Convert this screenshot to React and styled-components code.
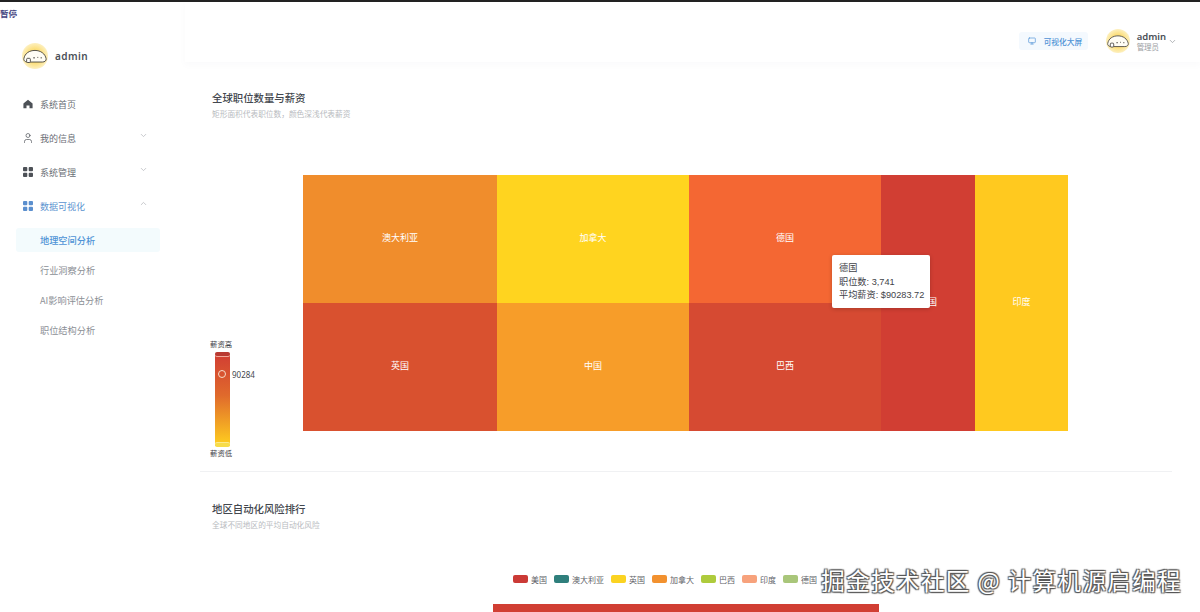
import React from 'react';
import styled, { createGlobalStyle } from 'styled-components';
import { ChevronDown, ChevronUp, Monitor, User } from 'lucide-react';

const GlobalStyle = createGlobalStyle`
  html, body {
    margin: 0;
    padding: 0;
    background: #fff;
    overflow: hidden;
  }
  body {
    font-family: "Noto Sans CJK SC", "Noto Sans", sans-serif;
    color: #4a4f57;
  }
`;

const Page = styled.div`
  position: relative;
  display: flex;
  width: 1200px;
  height: 612px;
  overflow: hidden;
  border-top: 2px solid #222;
  box-sizing: border-box;
`;

const PausedMark = styled.div`
  position: absolute;
  left: 0;
  top: 5px;
  font-size: 8.5px;
  line-height: 12px;
  font-weight: 700;
  color: #45457f;
`;

const Sidebar = styled.aside`
  flex: 0 0 185px;
  box-sizing: border-box;
  padding: 40px 0 0 16px;
`;

const Brand = styled.div`
  display: flex;
  align-items: center;
  gap: 7px;
  height: 28px;
  padding-left: 6px;
  margin-bottom: 17px;
  font-family: "Noto Sans", sans-serif;
  font-size: 10px;
  font-weight: 600;
  letter-spacing: 0.4px;
  color: #4a4f57;
`;

const MenuRow = styled.div`
  display: flex;
  align-items: center;
  width: 144px;
  height: 34px;
  box-sizing: border-box;
  padding-left: 6px;
  font-size: 9px;
  color: ${p => (p.$open ? '#5b93cf' : '#6a6e75')};
`;

const MenuIcon = styled.span`
  display: flex;
  justify-content: center;
  width: 12px;
  margin-right: 6px;
  color: ${p => (p.$open ? '#5b8fce' : '#4d5157')};
`;

const MenuLabel = styled.span`
  flex: 1;
`;

const Caret = styled.span`
  display: flex;
  margin-right: 12px;
  margin-top: -6px;
  color: #b5b8bc;
`;

const SubMenu = styled.div`
  padding-top: 5px;
`;

const SubRow = styled.div`
  display: flex;
  align-items: center;
  width: 144px;
  height: 24px;
  margin-bottom: 6px;
  padding-left: 24px;
  box-sizing: border-box;
  border-radius: 3px;
  font-size: 9.2px;
  background: ${p => (p.$active ? '#f3fbfd' : 'transparent')};
  color: ${p => (p.$active ? '#4f93d6' : '#8c9096')};
  font-weight: ${p => (p.$active ? 500 : 400)};
`;

const Main = styled.main`
  flex: 1;
  min-width: 0;
`;

const Header = styled.header`
  display: flex;
  justify-content: flex-end;
  align-items: center;
  height: 60px;
  padding: 18px 23px 0 0;
  box-sizing: border-box;
  box-shadow: 0 3px 6px rgba(120, 130, 150, 0.04);
`;

const ScreenButton = styled.div`
  display: flex;
  align-items: center;
  gap: 8px;
  width: 60px;
  height: 18px;
  padding-left: 9px;
  margin-right: 18px;
  border-radius: 3px;
  background: #f4f9fe;
  color: #4f93d6;
  font-size: 7.7px;
  font-weight: 500;
  white-space: nowrap;
`;

const UserName = styled.div`
  display: flex;
  flex-direction: column;
  margin-left: 7px;
  margin-right: 2px;
  font-size: 7.5px;
  line-height: 9px;
  color: #9a9da2;
`;

const UserTitle = styled.span`
  font-family: "Noto Sans", sans-serif;
  font-size: 9.5px;
  line-height: 11px;
  font-weight: 600;
  color: #4a4f57;
`;

const Content = styled.div`
  padding: 0 28px 0 15px;
`;

const Section = styled.section`
  padding: ${p => p.$top}px 0 0 12px;
  border-bottom: ${p => (p.$divided ? '1px solid #f0f1f3' : 'none')};
  height: ${p => p.$height}px;
  box-sizing: border-box;
`;

const SectionTitle = styled.h3`
  margin: 0;
  font-size: 10.4px;
  line-height: 14px;
  font-weight: 500;
  color: #43474e;
`;

const SectionHint = styled.p`
  margin: 3px 0 0;
  font-size: 7.7px;
  line-height: 11px;
  color: #b8bbc0;
`;

const ChartRow = styled.div`
  display: flex;
  align-items: flex-start;
  margin-top: 56px;
`;

const VisualMap = styled.div`
  flex: 0 0 93px;
  display: flex;
  flex-direction: column;
  align-items: flex-start;
  margin-top: 163px;
  margin-left: -2px;
`;

const MapLabel = styled.span`
  font-size: 7.4px;
  line-height: 11px;
  color: #3f4349;
`;

const MapBar = styled.div`
  position: relative;
  width: 15px;
  height: 92px;
  margin: 5px 0 1px 5px;
  background: linear-gradient(#d13e33, #e06a2c 45%, #ffd01f);
`;

const MapCap = styled.span`
  position: absolute;
  left: 0;
  width: 15px;
  height: 4px;
  border-radius: 2px;
  top: ${p => (p.$end ? '89px' : '-2px')};
  background: ${p => (p.$end ? '#f7dc4a' : '#b93a32')};
  box-shadow: ${p => (p.$end ? '0 -1px 0 #fbe98c' : '0 1px 0 #f2a99a')};
`;

const MapHandle = styled.span`
  position: absolute;
  left: 3px;
  top: 16px;
  width: 8px;
  height: 8px;
  box-sizing: border-box;
  border: 1.5px solid #f5ddc8;
  border-radius: 50%;
`;

const MapValue = styled.span`
  position: absolute;
  left: 17px;
  top: 15px;
  font-family: "Noto Sans", sans-serif;
  font-size: 8px;
  line-height: 11px;
  color: #43474e;
`;

const Treemap = styled.div`
  position: relative;
  display: grid;
  grid-template-columns: 194px 192px 192px 94px 93px;
  grid-template-rows: 128px 128px;
  width: 765px;
`;

const Tile = styled.div`
  display: flex;
  align-items: center;
  justify-content: center;
  padding-bottom: 3px;
  box-sizing: border-box;
  grid-column: ${p => p.$col};
  grid-row: ${p => (p.$tall ? '1 / span 2' : p.$row)};
  background: ${p => p.$color};
  color: #fff;
  font-size: 9px;
`;

const Tooltip = styled.div`
  position: absolute;
  left: 529px;
  top: 80px;
  width: 98px;
  height: 53px;
  box-sizing: border-box;
  padding: 7px 7px;
  border-radius: 2px;
  background: #fff;
  box-shadow: 0 1px 4px rgba(0, 0, 0, 0.2);
  font-family: "Liberation Sans", "Noto Sans CJK SC", sans-serif;
  font-size: 9.2px;
  line-height: 13.5px;
  color: #3f4349;
  white-space: nowrap;
`;

const Legend = styled.div`
  display: flex;
  align-items: center;
  margin: 44px 0 0 301px;
  height: 10px;
  white-space: nowrap;
`;

const LegendItem = styled.div`
  display: flex;
  align-items: center;
  gap: 3px;
  margin-right: 7px;
  font-size: 8px;
  color: #5f6369;
`;

const Swatch = styled.span`
  width: 15px;
  height: 8px;
  border-radius: 2px;
  background: ${p => p.$color};
`;

const BarStub = styled.div`
  width: 386px;
  height: 8px;
  margin: 20px 0 0 281px;
  background: #d13e33;
`;

const Watermark = styled.div`
  position: absolute;
  right: 18px;
  bottom: 17px;
  font-size: 23.5px;
  line-height: 30px;
  color: #fff;
  letter-spacing: 1.4px;
  white-space: nowrap;
  text-shadow: 1px 1px 1px #555, -1px 1px 1px #555, 1px -1px 1px #555, -1px -1px 1px #555;
`;

const Avatar = ({ size, id }) => (
  <svg width={size} height={size} viewBox="0 0 28 28">
    <defs>
      <radialGradient id={id}>
        <stop offset="55%" stopColor="#fcdf7c" />
        <stop offset="100%" stopColor="#fdf0c0" />
      </radialGradient>
    </defs>
    <circle cx="14" cy="14" r="14" fill={`url(#${id})`} />
    <path
      d="M2 17C3 11 8 8 14 8s11 3.500 12 9c.3 2-1.500 3.500-4 3.500H8c-3.500.5-6.500-1-6-3.500z"
      fill="#fffdf4"
      stroke="#4a4640"
      strokeWidth="1"
    />
    <rect x="5" y="16.500" width="4" height="4.500" rx="1" fill="#fff" stroke="#4a4640" strokeWidth="1" />
    <path d="M12 16h2M16.500 15.500h1M20 16h1.500" stroke="#4a4640" strokeWidth="1" fill="none" />
  </svg>
);

const HomeIcon = () => (
  <svg width="10" height="10" viewBox="0 0 12 12" fill="currentColor">
    <path d="M6 .8 11.500 5.500V11.200H7.800V7.800H4.200V11.200H.5V5.500z" />
  </svg>
);

const TilesIcon = () => (
  <svg width="10" height="10" viewBox="0 0 10 10" fill="currentColor">
    <rect x="0" y="0" width="4.300" height="4.300" rx="1" />
    <rect x="5.700" y="0" width="4.300" height="4.300" rx="1" />
    <rect x="0" y="5.700" width="4.300" height="4.300" rx="1" />
    <rect x="5.700" y="5.700" width="4.300" height="4.300" rx="1" />
  </svg>
);

const tiles = [
  { name: '澳大利亚', color: '#f08d2c', col: 1, row: 1 },
  { name: '加拿大', color: '#ffd41f', col: 2, row: 1 },
  { name: '德国', color: '#f46733', col: 3, row: 1 },
  { name: '美国', color: '#d13e33', col: 4, tall: true },
  { name: '印度', color: '#ffc91f', col: 5, tall: true },
  { name: '英国', color: '#d9512f', col: 1, row: 2 },
  { name: '中国', color: '#f79d29', col: 2, row: 2 },
  { name: '巴西', color: '#d64a32', col: 3, row: 2 },
];

const legend = [
  { name: '美国', color: '#cb3a36' },
  { name: '澳大利亚', color: '#2f7f7c' },
  { name: '英国', color: '#fbd321' },
  { name: '加拿大', color: '#f2912f' },
  { name: '巴西', color: '#aecb3c' },
  { name: '印度', color: '#f7a27c' },
  { name: '德国', color: '#a9c67a' },
];

export default function App() {
  return (
    <Page>
      <GlobalStyle />
      <PausedMark>暂停</PausedMark>
      <Sidebar>
        <Brand>
          <Avatar size={26} id="brand-halo" />
          admin
        </Brand>
        <MenuRow>
          <MenuIcon><HomeIcon /></MenuIcon>
          <MenuLabel>系统首页</MenuLabel>
        </MenuRow>
        <MenuRow>
          <MenuIcon><User size={12} strokeWidth={1.4} /></MenuIcon>
          <MenuLabel>我的信息</MenuLabel>
          <Caret><ChevronDown size={9} /></Caret>
        </MenuRow>
        <MenuRow>
          <MenuIcon><TilesIcon /></MenuIcon>
          <MenuLabel>系统管理</MenuLabel>
          <Caret><ChevronDown size={9} /></Caret>
        </MenuRow>
        <MenuRow $open>
          <MenuIcon $open><TilesIcon /></MenuIcon>
          <MenuLabel>数据可视化</MenuLabel>
          <Caret><ChevronUp size={9} /></Caret>
        </MenuRow>
        <SubMenu>
          <SubRow $active>地理空间分析</SubRow>
          <SubRow>行业洞察分析</SubRow>
          <SubRow>AI影响评估分析</SubRow>
          <SubRow>职位结构分析</SubRow>
        </SubMenu>
      </Sidebar>
      <Main>
        <Header>
          <ScreenButton>
            <Monitor size={8} />
            可视化大屏
          </ScreenButton>
          <Avatar size={24} id="user-halo" />
          <UserName>
            <UserTitle>admin</UserTitle>
            管理员
          </UserName>
          <ChevronDown size={9} color="#9a9da2" />
        </Header>
        <Content>
          <Section $divided $height={410} $top={29}>
            <SectionTitle>全球职位数量与薪资</SectionTitle>
            <SectionHint>矩形面积代表职位数，颜色深浅代表薪资</SectionHint>
            <ChartRow>
              <VisualMap>
                <MapLabel>薪资高</MapLabel>
                <MapBar>
                  <MapCap />
                  <MapHandle />
                  <MapValue>90284</MapValue>
                  <MapCap $end />
                </MapBar>
                <MapLabel>薪资低</MapLabel>
              </VisualMap>
              <Treemap>
                {tiles.map(t => (
                  <Tile key={t.name} $color={t.color} $col={t.col} $row={t.row} $tall={t.tall}>{t.name}</Tile>
                ))}
                <Tooltip>
                  德国<br />
                  职位数: 3,741<br />
                  平均薪资: $90283.72
                </Tooltip>
              </Treemap>
            </ChartRow>
          </Section>
          <Section $height={140} $top={30}>
            <SectionTitle>地区自动化风险排行</SectionTitle>
            <SectionHint>全球不同地区的平均自动化风险</SectionHint>
            <Legend>
              {legend.map(l => (
                <LegendItem key={l.name}>
                  <Swatch $color={l.color} />
                  {l.name}
                </LegendItem>
              ))}
            </Legend>
            <BarStub />
          </Section>
        </Content>
      </Main>
      <Watermark>掘金技术社区 @ 计算机源启编程</Watermark>
    </Page>
  );
}
